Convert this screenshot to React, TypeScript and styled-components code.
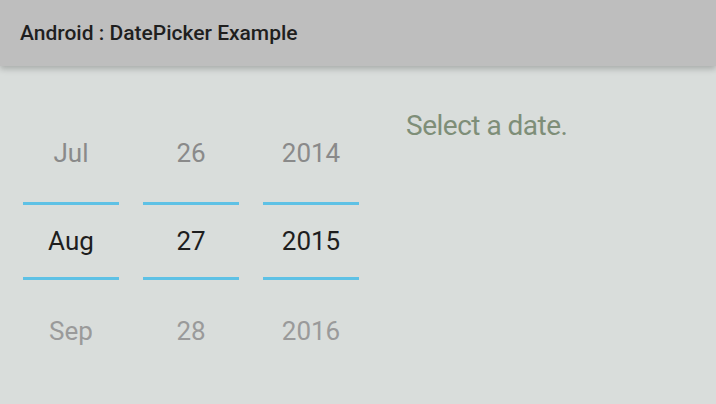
import styled, {createGlobalStyle} from "styled-components";

const GlobalStyle = createGlobalStyle`
  html, body {
    margin: 0;
    padding: 0;
    background: #d9dddb;
    font-family: Roboto, "Noto Sans", sans-serif;
  }
`;

const Screen = styled.div`
  width: 716px;
  height: 404px;
  overflow: hidden;
  background: #d9dddb;
  display: flex;
  flex-direction: column;
`;

const Toolbar = styled.header`
  height: 66px;
  flex-shrink: 0;
  background: #bebebe;
  box-shadow: 0 3px 6px rgba(0, 0, 0, 0.22);
  display: flex;
  align-items: center;
  padding-left: 20px;
  position: relative;
  z-index: 1;

  h1 {
    margin: 0 0 1px;
    font-size: 21px;
    font-weight: 500;
    color: #1f1f1f;
  }
`;

const Body = styled.main`
  display: flex;
  padding-left: 23px;
`;

const Picker = styled.div`
  display: flex;
  gap: 24px;
  padding-top: 38px;
`;

const Column = styled.div`
  width: 96px;
  display: flex;
  flex-direction: column;
`;

const Item = styled.div<{ $faded?: boolean; $height: number }>`
  height: ${p => p.$height}px;
  display: flex;
  align-items: center;
  justify-content: center;
  font-size: 26px;
  color: ${p => (p.$faded ? "#9a9a9a" : "#8a8a8a")};
`;

const Selected = styled.div`
  height: 72px;
  border-top: 3px solid #5ec1e5;
  border-bottom: 3px solid #5ec1e5;
  display: flex;
  align-items: center;
  justify-content: center;
  font-size: 26px;
  color: #1e1e1e;
`;

const Result = styled.p`
  margin: 43px 0 0 47px;
  font-size: 28px;
  letter-spacing: -0.5px;
  color: #7e8e78;
`;

const columns = [
  ["Jul", "Aug", "Sep"],
  ["26", "27", "28"],
  ["2014", "2015", "2016"],
];

export default function App() {
  return (
    <>
      <GlobalStyle/>
      <Screen>
        <Toolbar>
          <h1>Android : DatePicker Example</h1>
        </Toolbar>
        <Body>
          <Picker>
            {columns.map((col, i) => (
              <Column key={i}>
                <Item $height={98}>{col[0]}</Item>
                <Selected>{col[1]}</Selected>
                <Item $height={102} $faded>{col[2]}</Item>
              </Column>
            ))}
          </Picker>
          <Result>Select a date.</Result>
        </Body>
      </Screen>
    </>
  );
}
